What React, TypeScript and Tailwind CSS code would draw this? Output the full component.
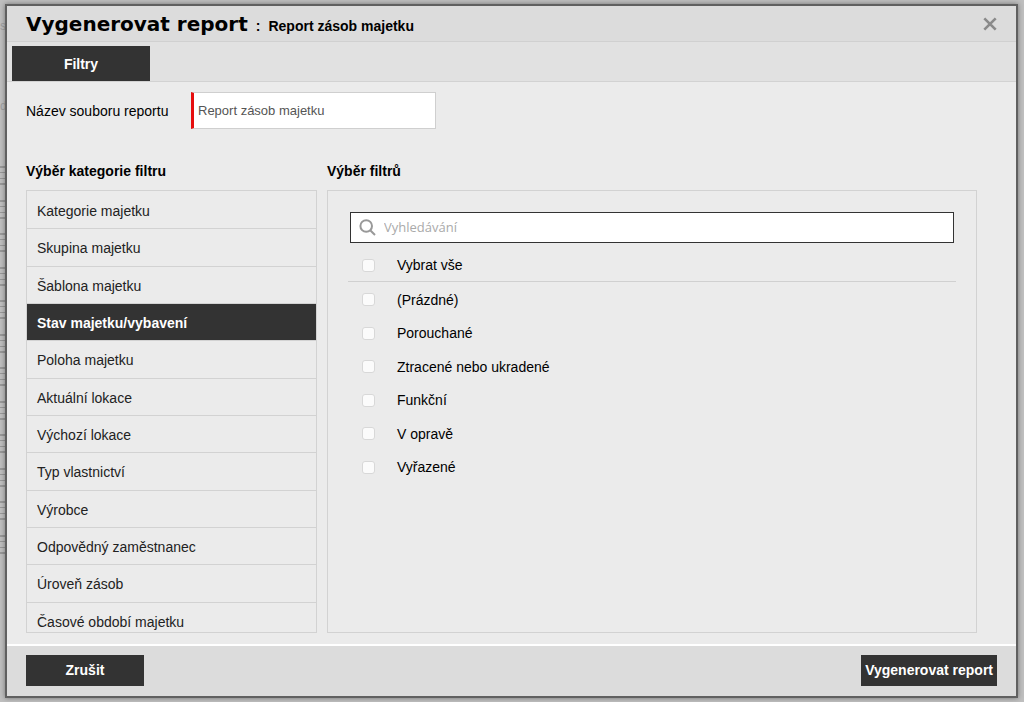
import React, { useState } from 'react';

const categories = [
  'Kategorie majetku',
  'Skupina majetku',
  'Šablona majetku',
  'Stav majetku/vybavení',
  'Poloha majetku',
  'Aktuální lokace',
  'Výchozí lokace',
  'Typ vlastnictví',
  'Výrobce',
  'Odpovědný zaměstnanec',
  'Úroveň zásob',
  'Časové období majetku',
];

const options = [
  '(Prázdné)',
  'Porouchané',
  'Ztracené nebo ukradené',
  'Funkční',
  'V opravě',
  'Vyřazené',
];

interface CheckRowProps {
  label: string;
  checked: boolean;
  onChange: () => void;
}

function CheckRow({ label, checked, onChange }: CheckRowProps) {
  return (
    <label className="flex cursor-pointer items-center gap-[22px] pl-3.5">
      <input
        type="checkbox"
        checked={checked}
        onChange={onChange}
        className="size-[13px] shrink-0 appearance-none rounded-[3px] border border-[#d8d8d8] bg-[#fbfbfb] checked:bg-[#333333]"
      />
      {label}
    </label>
  );
}

// Edge of the page that stays visible behind the dialog
function Backdrop() {
  return (
    <div className="absolute inset-0 overflow-hidden text-xs text-[#a0a0a0]" aria-hidden="true">
      <div className="flex w-[5px] flex-col">
        <div className="flex h-[34px] items-end">s</div>
        <div className="flex h-[80px] items-end">dá</div>
        <div className="mt-[52px] grid h-[402px] auto-rows-fr">
          {categories.map((c) => (
            <div key={c}>
              <div className="h-[19px] border-y-2 border-[#999999] py-1">
                <div className="h-[7px] border-y border-[#999999]" />
              </div>
            </div>
          ))}
        </div>
      </div>
    </div>
  );
}

export default function App() {
  const [fileName, setFileName] = useState('Report zásob majetku');
  const [active, setActive] = useState('Stav majetku/vybavení');
  const [query, setQuery] = useState('');
  const [selected, setSelected] = useState<string[]>([]);

  const toggle = (name: string) =>
    setSelected((prev) => (prev.includes(name) ? prev.filter((n) => n !== name) : [...prev, name]));

  const allSelected = selected.length === options.length;
  const toggleAll = () => setSelected(allSelected ? [] : options);

  return (
    <div className="relative flex h-screen flex-col bg-[#bfbfbf] pt-1 pr-1.5 pb-1 pl-[5px] font-['Liberation_Sans',Arial,sans-serif] text-sm text-black">
      <Backdrop />

      <div
        role="dialog"
        aria-labelledby="dialog-title"
        className="relative flex min-h-0 flex-1 flex-col border-2 border-[#606060] bg-[#ebebeb] shadow-[0_0_5px_rgba(0,0,0,0.4)]"
      >
        {/* Title bar */}
        <header className="flex h-9 shrink-0 items-center justify-between border-b border-[#d0d0d0] bg-[#dcdcdc] pr-[19px] pl-[19px]">
          <div className="flex items-baseline font-bold">
            <h1 id="dialog-title" className="font-['DejaVu_Sans',sans-serif] text-xl font-bold">
              Vygenerovat report
            </h1>
            <span className="px-2">:</span>
            <span>Report zásob majetku</span>
          </div>
          <button type="button" aria-label="Zavřít" className="text-[#8a8a8a]">
            <svg viewBox="0 0 14 14" className="size-3.5" fill="none" stroke="currentColor" strokeWidth="2.6">
              <path d="M1.3 1.3 12.7 12.7M12.7 1.3 1.3 12.7" />
            </svg>
          </button>
        </header>

        {/* Tabs */}
        <nav className="flex h-10 shrink-0 items-center border-b border-[#d2d2d2] bg-[#e1e1e1] px-[5px] pt-1">
          <button type="button" className="h-[35px] w-[138px] bg-[#333333] font-bold text-white">
            Filtry
          </button>
        </nav>

        <main className="flex min-h-0 flex-1 flex-col pr-[39px] pb-[11px] pl-[19px]">
          <div className="flex shrink-0 items-center pt-2.5">
            <label htmlFor="file-name" className="w-[165px]">
              Název souboru reportu
            </label>
            <input
              id="file-name"
              type="text"
              value={fileName}
              onChange={(e) => setFileName(e.target.value)}
              className="h-[37px] w-[245px] border border-l-[3px] border-[#cfcfcf] border-l-[#e60d0d] bg-white pl-1 text-[13px] text-[#555555] outline-none"
            />
          </div>

          <div className="flex min-h-0 flex-1 gap-2.5 pt-8">
            <section className="flex w-[291px] shrink-0 flex-col">
              <h2 className="pb-[9px] font-bold leading-5">Výběr kategorie filtru</h2>
              <div className="min-h-0 flex-1 overflow-y-auto border border-[#d2d2d2] pt-px [scrollbar-width:none]">
                <ul className="grid h-[448px] auto-rows-fr">
                  {categories.map((c) => (
                    <li key={c} className="border-b border-[#d2d2d2]">
                      <button
                        type="button"
                        onClick={() => setActive(c)}
                        className={
                          c === active
                            ? 'h-full w-full bg-[#333333] px-2.5 pt-0.5 text-left font-bold text-white'
                            : 'h-full w-full px-2.5 pt-0.5 text-left text-[#222222]'
                        }
                      >
                        {c}
                      </button>
                    </li>
                  ))}
                </ul>
              </div>
            </section>

            <section className="flex min-w-0 flex-1 flex-col">
              <h2 className="pb-[9px] font-bold leading-5">Výběr filtrů</h2>
              <div className="min-h-0 flex-1 overflow-y-auto border border-[#d2d2d2] px-5 pt-[21px] [scrollbar-width:none]">
                <label className="mx-0.5 flex h-[31px] items-center gap-2 border border-[#333333] bg-white px-2">
                  <svg viewBox="0 0 17 17" className="size-[17px]" fill="none" stroke="#999999" strokeWidth="2">
                    <circle cx="7.2" cy="7" r="5.8" />
                    <path d="m11.2 11.2 4.8 4.8" />
                  </svg>
                  <input
                    type="text"
                    value={query}
                    onChange={(e) => setQuery(e.target.value)}
                    placeholder="Vyhledávání"
                    aria-label="Vyhledávání"
                    className="min-w-0 flex-1 font-['Open_Sans','Noto_Sans',sans-serif] text-[13px] outline-none placeholder:text-[#aaaaaa]"
                  />
                </label>
                <div className="grid h-[39px] border-b border-[#d0d0d0] pt-1.5">
                  <CheckRow label="Vybrat vše" checked={allSelected} onChange={toggleAll} />
                </div>
                <div className="mt-px grid h-[201px] auto-rows-fr">
                  {options.map((o) => (
                    <CheckRow key={o} label={o} checked={selected.includes(o)} onChange={() => toggle(o)} />
                  ))}
                </div>
              </div>
            </section>
          </div>
        </main>

        <footer className="flex h-[52px] shrink-0 items-center justify-between border-t-2 border-white bg-[#dcdcdc] px-[19px] pb-0.5 font-bold text-white">
          <button type="button" className="h-[31px] w-[118px] bg-[#333333]">
            Zrušit
          </button>
          <button type="button" className="h-[31px] bg-[#333333] px-1">
            Vygenerovat report
          </button>
        </footer>
      </div>
    </div>
  );
}
